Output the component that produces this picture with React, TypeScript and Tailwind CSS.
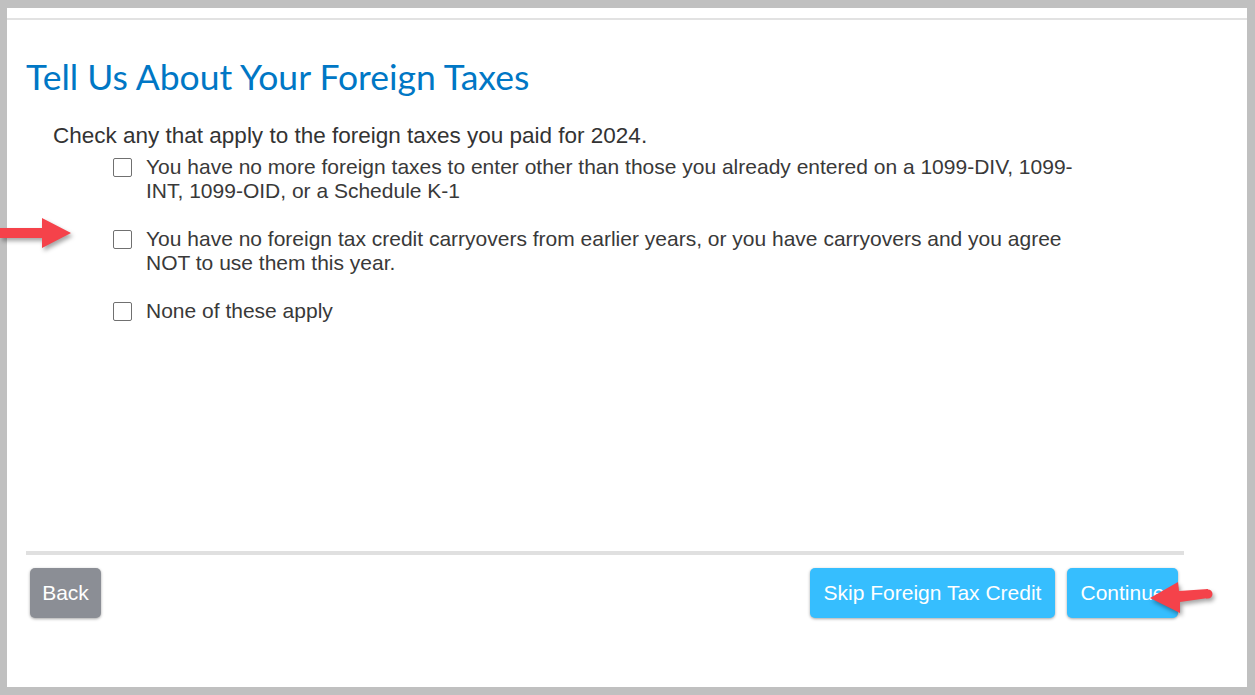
import React from "react";

const items = [
  "You have no more foreign taxes to enter other than those you already entered on a 1099-DIV, 1099-INT, 1099-OID, or a Schedule K-1",
  "You have no foreign tax credit carryovers from earlier years, or you have carryovers and you agree NOT to use them this year.",
  "None of these apply",
];

const ArrowRight = () => (
  <svg className="absolute left-0 top-[214px] drop-shadow-[2px_3px_2px_rgba(0,0,0,0.35)]" width="80" height="40" viewBox="0 0 80 40">
    <polygon points="0,14 42,14 42,4 71,19 42,34 42,24 0,24" fill="#f5424a" />
  </svg>
);

const ArrowLeft = () => (
  <svg className="absolute left-[1146px] top-[578px] drop-shadow-[2px_3px_2px_rgba(0,0,0,0.35)]" width="72" height="40" viewBox="0 0 72 40">
    <polygon points="4,20 32,4 33,13 62,11 62,20 34,24 34,35" fill="#f5424a" />
    <path d="M60 11.5 L62 11.5 A4.5 4.5 0 0 1 62 20.5 L60 20.5 Z" fill="#f5424a" />
  </svg>
);

const Checkbox = () => (
  <span className="mt-[3px] h-[19px] w-[19px] shrink-0 rounded-[2px] border-[1.5px] border-[#707070] bg-white" />
);

export default function App() {
  return (
    <div className="relative h-[695px] w-[1255px] bg-[#c0c0c0] pb-[8px] pl-[7px] pr-[8px] pt-[8px] font-['Liberation_Sans',Arial,sans-serif]">
      <div className="flex h-full flex-col bg-white pt-[10px]">
        <div className="h-[2px] w-full bg-[#e2e2e2]" />
        <div className="flex flex-1 flex-col px-[19px]">
          <h1 className="mt-[36px] font-['Lato','Open_Sans',sans-serif] text-[35.5px] leading-[42px] text-[#0077c5]">
            Tell Us About Your Foreign Taxes
          </h1>
          <div className="mt-[25px] pl-[27px]">
            <p className="text-[22.5px] leading-[26px] text-[#333]">
              Check any that apply to the foreign taxes you paid for 2024.
            </p>
            <div className="mt-[6px] flex flex-col gap-[24px] pl-[60px]">
              {items.map((t) => (
                <label key={t} className="flex gap-[14px] text-[21px] leading-[24px] text-[#393939]">
                  <Checkbox />
                  <span className="max-w-[935px]">{t}</span>
                </label>
              ))}
            </div>
          </div>
          <div className="mt-auto mb-[13px] h-[4px] w-[1158px] bg-[#e0e0e0]" />
          <div className="mb-[69px] flex w-[1158px] items-center justify-between pl-[4px] pr-[6px]">
            <button className="h-[50px] w-[71px] rounded-[5px] bg-[#8b8e95] text-[21px] text-white shadow-[0_1px_3px_rgba(0,0,0,0.35)]">
              Back
            </button>
            <div className="flex gap-[12px]">
              <button className="h-[50px] w-[245px] rounded-[5px] bg-[#36befe] text-[21px] text-white shadow-[0_1px_3px_rgba(0,0,0,0.35)]">
                Skip Foreign Tax Credit
              </button>
              <button className="h-[50px] w-[111px] rounded-[5px] bg-[#36befe] text-[21px] text-white shadow-[0_1px_3px_rgba(0,0,0,0.35)]">
                Continue
              </button>
            </div>
          </div>
        </div>
      </div>
      <ArrowRight />
      <ArrowLeft />
    </div>
  );
}
